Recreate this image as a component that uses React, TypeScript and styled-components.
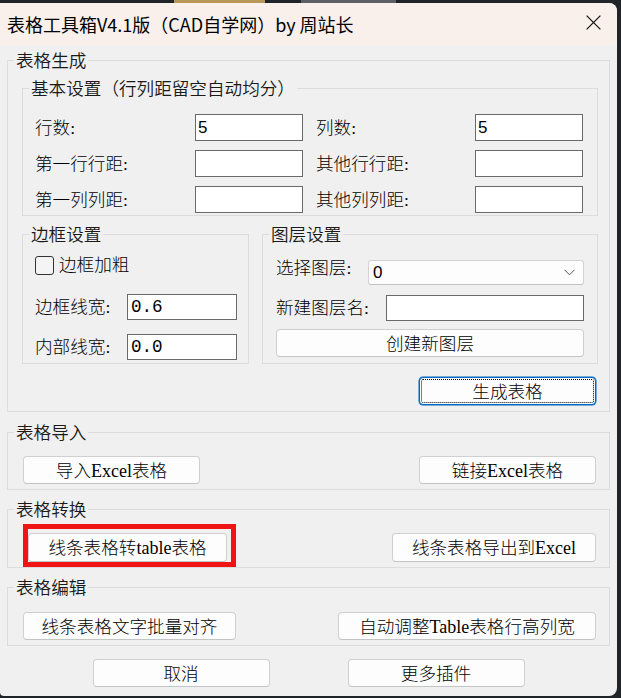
import styled, { createGlobalStyle } from "styled-components";

const GlobalStyle = createGlobalStyle`
  html, body {
    margin: 0;
    padding: 0;
    background: #1f2429;
  }
  body {
    font-family: "Liberation Serif", "Noto Sans CJK SC", serif;
    font-size: 17.6px;
    color: #000;
  }
  * {
    box-sizing: border-box;
  }
`;

const Screen = styled.div`
  width: 621px;
  height: 698px;
  padding-top: 3px;
  overflow: hidden;
  background: linear-gradient(
        to right,
        #1f2429 174px,
        #b8975a 174px,
        #b8975a 265px,
        #1f2429 265px,
        #1f2429 301px,
        #5d6166 301px,
        #5d6166 396px,
        #1f2429 396px
      )
      top left / 100% 3px no-repeat,
    #1f2429;
`;

const Window = styled.div`
  width: 617px;
  height: 693px;
  background: #f0f0f0;
  border-radius: 0 8px 8px 4px;
  overflow: hidden;
  display: flex;
  flex-direction: column;
`;

const TitleBar = styled.div`
  height: 42px;
  flex: none;
  background: #f9f0ec;
  display: flex;
  align-items: center;
  justify-content: space-between;
  padding: 0 16px 0 7px;
  font-family: "Noto Sans CJK SC", sans-serif;
  font-size: 18px;
  line-height: 22px;
`;

const CloseIcon = styled.svg`
  width: 15px;
  height: 15px;
  margin-top: -3px;
`;

const Content = styled.div`
  padding: 5px 7px 0 7px;
  display: flex;
  flex-direction: column;
`;

const Group = styled.fieldset<{ $top?: number; $w?: number }>`
  margin: ${(p) => p.$top || 0}px 0 0 0;
  padding: 0;
  border: 1px solid #dcdcdc;
  min-width: 0;
  ${(p) => (p.$w ? `width: ${p.$w}px; flex: none;` : "flex: 1;")}
`;

const Caption = styled.legend`
  margin-left: 6px;
  padding: 0 2px;
  font-family: "Noto Sans CJK SC", sans-serif;
  font-size: 17.6px;
  font-weight: 350;
  line-height: 20px;
  color: #1a1a1a;
`;

const GroupBody = styled.div<{ $pad: string }>`
  padding: ${(p) => p.$pad};
  display: flex;
  flex-direction: column;
`;

const Grid = styled.div`
  display: grid;
  grid-template-columns: 160px 108px 172px 108px;
  grid-auto-rows: 27px;
  row-gap: 9px;
  align-items: center;
`;

const Label = styled.span<{ $w?: number; $indent?: number }>`
  ${(p) => (p.$w ? `width: ${p.$w}px; flex: none;` : "")}
  padding-left: ${(p) => p.$indent || 0}px;
  font-weight: 300;
  line-height: 20px;
  white-space: nowrap;
`;

const TextBox = styled.div<{ $mono?: boolean; $h?: number }>`
  height: ${(p) => p.$h || 27}px;
  background: #fff;
  border: 1px solid #6a6a6a;
  padding-left: ${(p) => (p.$mono ? 3 : 2)}px;
  display: flex;
  align-items: center;
  font-family: ${(p) =>
    p.$mono ? `"Liberation Mono", monospace` : `"Liberation Sans", sans-serif`};
  font-size: ${(p) => (p.$mono ? 17.6 : 17)}px;
  flex: 1;
`;

const Row = styled.div<{ $top?: number; $h?: number }>`
  display: flex;
  align-items: center;
  margin-top: ${(p) => p.$top || 0}px;
  ${(p) => (p.$h ? `height: ${p.$h}px;` : "")}
`;

const Pair = styled.div`
  display: flex;
  gap: 13px;
  margin-top: 8px;
`;

const CheckBox = styled.span`
  width: 19px;
  height: 19px;
  border: 1px solid #333;
  border-radius: 3px;
  background: #f4f4f4;
  margin-right: 5px;
  flex: none;
`;

const Select = styled.div`
  flex: 1;
  height: 25px;
  background: #fdfdfd;
  border: 1px solid #d3d3d3;
  border-bottom-color: #c2c2c2;
  border-radius: 3px;
  display: flex;
  align-items: center;
  justify-content: space-between;
  padding: 0 8px 0 4px;
  font-family: "Liberation Sans", sans-serif;
  font-size: 17px;
`;

const Button = styled.button<{ $w?: number; $h?: number; $focus?: boolean }>`
  ${(p) => (p.$w ? `width: ${p.$w}px;` : "width: 100%;")}
  height: ${(p) => p.$h || 28}px;
  flex: none;
  background: #fdfdfd;
  border: 1px solid ${(p) => (p.$focus ? "#0067c0" : "#d0d0d0")};
  border-bottom-color: ${(p) => (p.$focus ? "#0067c0" : "#c4c4c4")};
  border-radius: 4px;
  font-family: "Noto Sans CJK SC", sans-serif;
  font-size: 17.6px;
  font-weight: 300;
  line-height: 20px;
  color: #000;
  padding: 0;
  ${(p) =>
    p.$focus
      ? `outline: 1px dotted #000; outline-offset: -3px; box-shadow: 0 0 0 0.5px #0067c0;`
      : ""}
`;

const Latin = styled.span`
  font-family: "Liberation Serif", serif;
  font-size: 18px;
  font-weight: 400;
`;

const ButtonRow = styled.div<{ $align?: string; $justify?: string; $top?: number }>`
  display: flex;
  justify-content: ${(p) => p.$justify || "space-between"};
  align-items: ${(p) => p.$align || "center"};
  margin-top: ${(p) => p.$top || 0}px;
`;

const Highlight = styled.div`
  border: 5px solid #f01414;
  padding: 4px 4px 0 0;
`;

const Footer = styled.div`
  display: flex;
  justify-content: center;
  gap: 78px;
  margin-top: 13px;
`;

const Chevron = () => (
  <svg width="11" height="7" viewBox="0 0 11 7">
    <polyline points="0.5,0.8 5.5,5.8 10.5,0.8" fill="none" stroke="#555" strokeWidth="1" />
  </svg>
);

export default function App() {
  return (
    <>
      <GlobalStyle />
      <Screen>
        <Window>
          <TitleBar>
            <span>表格工具箱V4.1版（CAD自学网）by 周站长</span>
            <CloseIcon viewBox="0 0 15 15">
              <path d="M0.6 0.6 L14.4 14.4 M14.4 0.6 L0.6 14.4" stroke="#1a1a1a" strokeWidth="1.3" />
            </CloseIcon>
          </TitleBar>
          <Content>
            <Group>
              <Caption>表格生成</Caption>
              <GroupBody $pad="8px 11px 6px 14px">
                <Group>
                  <Caption>基本设置（行列距留空自动均分）</Caption>
                  <GroupBody $pad="16px 13px 2px 12px">
                    <Grid>
                      <Label>行数:</Label>
                      <TextBox>5</TextBox>
                      <Label $indent={13}>列数:</Label>
                      <TextBox>5</TextBox>
                      <Label>第一行行距:</Label>
                      <TextBox />
                      <Label $indent={13}>其他行行距:</Label>
                      <TextBox />
                      <Label>第一列列距:</Label>
                      <TextBox />
                      <Label $indent={13}>其他列列距:</Label>
                      <TextBox />
                    </Grid>
                  </GroupBody>
                </Group>
                <Pair>
                  <Group $w={227}>
                    <Caption>边框设置</Caption>
                    <GroupBody $pad="8px 11px 3px 12px">
                      <Row $h={26}>
                        <CheckBox />
                        <Label>边框加粗</Label>
                      </Row>
                      <Row $top={16}>
                        <Label $w={92}>边框线宽:</Label>
                        <TextBox $mono $h={26}>0.6</TextBox>
                      </Row>
                      <Row $top={14}>
                        <Label $w={92}>内部线宽:</Label>
                        <TextBox $mono $h={26}>0.0</TextBox>
                      </Row>
                    </GroupBody>
                  </Group>
                  <Group>
                    <Caption>图层设置</Caption>
                    <GroupBody $pad="16px 13px 6px 13px">
                      <Row>
                        <Label $w={92} style={{ marginTop: -9 }}>
                          选择图层:
                        </Label>
                        <Select>
                          <span>0</span>
                          <Chevron />
                        </Select>
                      </Row>
                      <Row $top={10}>
                        <Label $w={110}>新建图层名:</Label>
                        <TextBox $h={26} />
                      </Row>
                      <Row $top={8}>
                        <Button>创建新图层</Button>
                      </Row>
                    </GroupBody>
                  </Group>
                </Pair>
                <ButtonRow $justify="flex-end" $top={13}>
                  <Button $w={177} $focus style={{ marginRight: 2 }}>
                    生成表格
                  </Button>
                </ButtonRow>
              </GroupBody>
            </Group>

            <Group $top={10}>
              <Caption>表格导入</Caption>
              <GroupBody $pad="14px 13px 5px 15px">
                <ButtonRow>
                  <Button $w={177}>
                    导入<Latin>Excel</Latin>表格
                  </Button>
                  <Button $w={177}>
                    链接<Latin>Excel</Latin>表格
                  </Button>
                </ButtonRow>
              </GroupBody>
            </Group>

            <Group $top={9}>
              <Caption>表格转换</Caption>
              <GroupBody $pad="5px 13px 0 15px">
                <ButtonRow $align="flex-end">
                  <Highlight>
                    <Button $w={199} $h={29}>
                      线条表格转<Latin>table</Latin>表格
                    </Button>
                  </Highlight>
                  <Button $w={204} $h={29} style={{ marginBottom: 5 }}>
                    线条表格导出到<Latin>Excel</Latin>
                  </Button>
                </ButtonRow>
              </GroupBody>
            </Group>

            <Group $top={9}>
              <Caption>表格编辑</Caption>
              <GroupBody $pad="15px 13px 5px 15px">
                <ButtonRow>
                  <Button $w={213}>线条表格文字批量对齐</Button>
                  <Button $w={258}>
                    自动调整<Latin>Table</Latin>表格行高列宽
                  </Button>
                </ButtonRow>
              </GroupBody>
            </Group>

            <Footer>
              <Button $w={177}>取消</Button>
              <Button $w={177}>更多插件</Button>
            </Footer>
          </Content>
        </Window>
      </Screen>
    </>
  );
}
